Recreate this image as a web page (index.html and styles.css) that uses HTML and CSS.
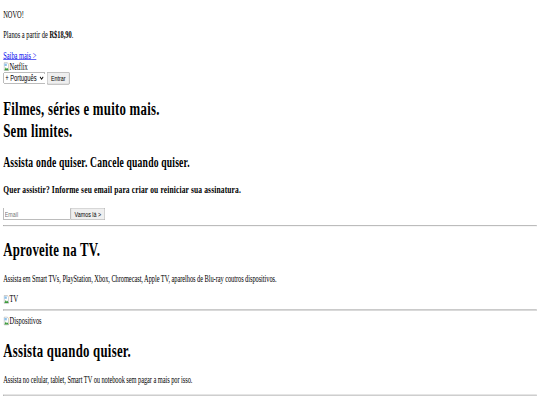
FILE: index.html
```html
<!DOCTYPE html>
<html lang="pt-BR">
<head>
    <meta charset="UTF-8">
    <title>Netflix Brasil</title>
<link rel="stylesheet" href="styles.css">
</head>
<body>
<div class="screen">
<div class="page">

    <div class="promo">
        <p>NOVO!</p>
        <p>Planos a partir de <b>R$18,90</b>.</p>
        <a href="#">Saiba mais &gt;</a>
    </div>

    <div class="topBar">
        <span class="pic">
            <svg class="picIcon" width="16" height="16" viewBox="0 0 16 16">
                <path d="M2.5 1.5h8l3 3v10h-11z" fill="#fff" stroke="#9a9a9a"/>
                <path d="M3 14l3.5-5 2.5 3 1.5-2 3 4z" fill="#3b9b3b"/>
                <rect x="3" y="3" width="6" height="4" fill="#8cc0ea"/>
            </svg>Netflix</span>
        <br>
        <form class="login">
            <select class="lang">
                <option>+ Português</option>
                <option>English</option>
            </select>
            <button type="button">Entrar</button>
        </form>
    </div>

    <div class="hero">
        <h1>Filmes, séries e muito mais.<br>Sem limites.</h1>
        <h2>Assista onde quiser. Cancele quando quiser.</h2>
        <h3>Quer assistir? Informe seu email para criar ou reiniciar sua assinatura.</h3>
        <form class="signup">
            <input type="email" placeholder="Email"><button type="button">Vamos lá &gt;</button>
        </form>
    </div>

    <hr>

    <div class="feature">
        <h1>Aproveite na TV.</h1>
        <p>Assista em Smart TVs, PlayStation, Xbox, Chromecast, Apple TV, aparelhos de Blu-ray coutros dispositivos.</p>
        <span class="pic">
            <svg class="picIcon" width="16" height="16" viewBox="0 0 16 16">
                <path d="M2.5 1.5h8l3 3v10h-11z" fill="#fff" stroke="#9a9a9a"/>
                <path d="M3 14l3.5-5 2.5 3 1.5-2 3 4z" fill="#3b9b3b"/>
                <rect x="3" y="3" width="6" height="4" fill="#8cc0ea"/>
            </svg>TV</span>
    </div>

    <hr>

    <div class="feature">
        <span class="pic">
            <svg class="picIcon" width="16" height="16" viewBox="0 0 16 16">
                <path d="M2.5 1.5h8l3 3v10h-11z" fill="#fff" stroke="#9a9a9a"/>
                <path d="M3 14l3.5-5 2.5 3 1.5-2 3 4z" fill="#3b9b3b"/>
                <rect x="3" y="3" width="6" height="4" fill="#8cc0ea"/>
            </svg>Dispositivos</span>
        <h1>Assista quando quiser.</h1>
        <p>Assista no celular, tablet, Smart TV ou notebook sem pagar a mais por isso.</p>
    </div>

    <hr>

</div>
</div>
</body>
</html>
```

FILE: styles.css
```css
html, body {
    margin: 0;
    overflow: hidden;
}
body {
    font-family: "Liberation Serif", serif;
    font-size: 16px;
    color: black;
}
.screen {
    width: 100vw;
    height: 100vh;
    overflow: hidden;
}
/* whole page is laid out wide and then squeezed into the small window */
.page {
    display: flow-root;
    width: 1350px;
    padding: 0 8px;
    box-sizing: border-box;
    transform: scale(0.4, 0.6);
    transform-origin: 0 0;
}
a {
    color: #0000ee;
}
h1, h2, h3 {
    letter-spacing: 0.02em;
}
.feature p {
    letter-spacing: -0.15px;
}
.pic {
    display: inline-block;
    line-height: 18px;
}
.picIcon {
    vertical-align: -3px;
}
input, select, button {
    font-family: "Liberation Sans", Arial, sans-serif;
    font-size: 13.33px;
}
button {
    padding: 1px 8.5px;
}
.lang {
    width: 105px;
    font-size: 14.5px;
}
.login {
    display: inline;
}
.signup {
    margin: 0;
}
.signup input {
    width: 160px;
}
hr {
    margin: 8px 0;
    border: 1px inset #d0d0d0;
}
```
